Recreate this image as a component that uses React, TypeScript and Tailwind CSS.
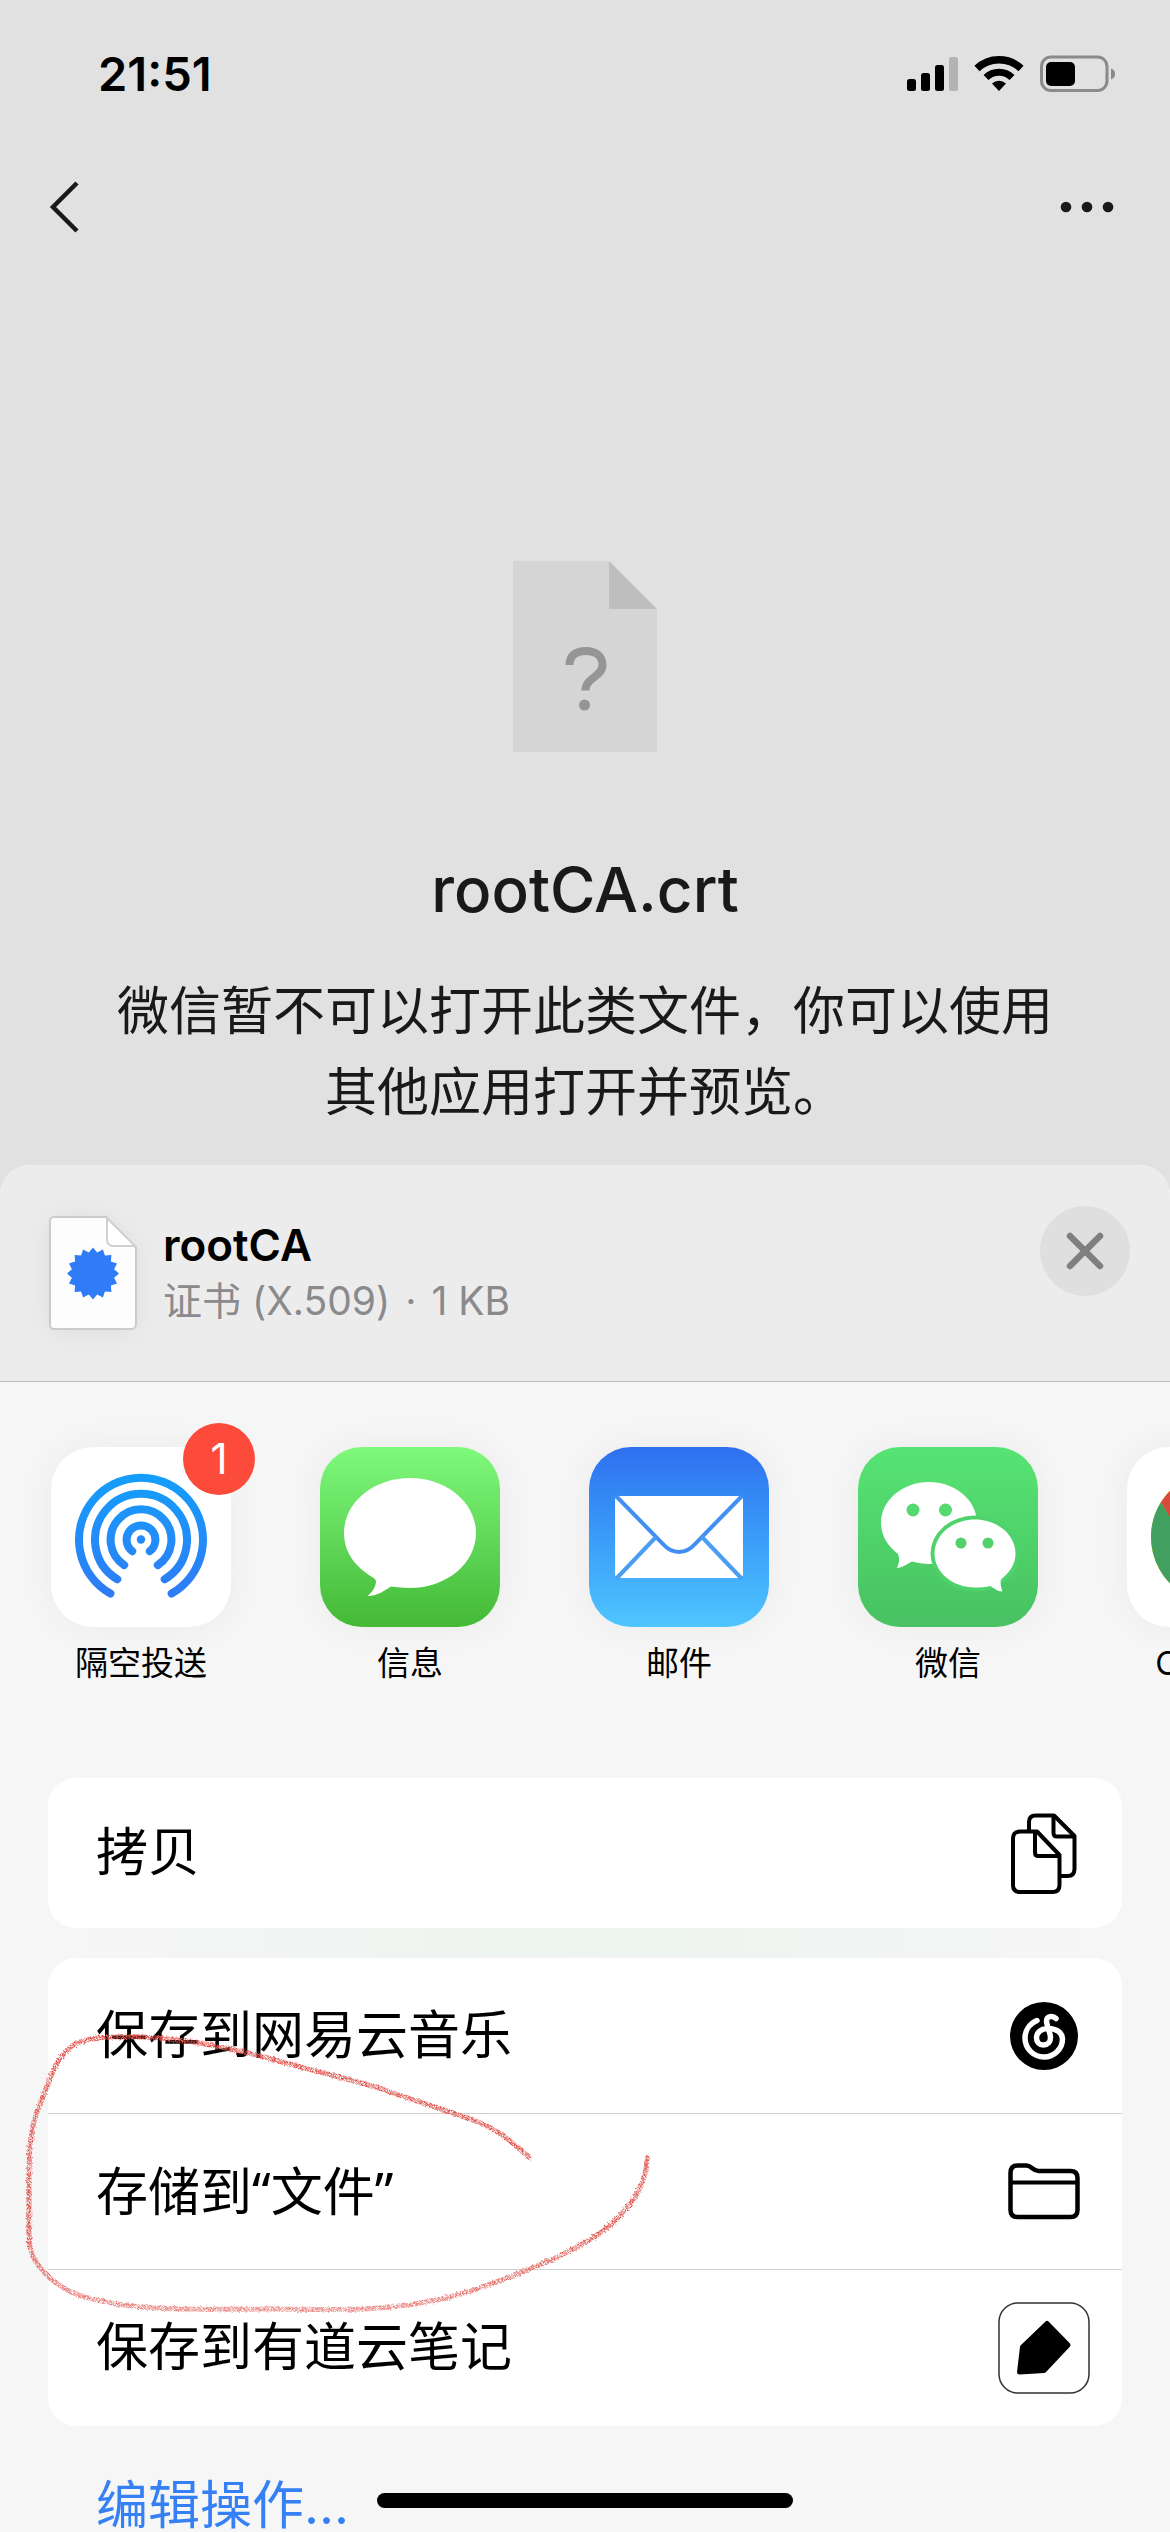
import React from "react";

const StatusIcons = () => (
  <svg className="h-[38px] w-[208px]" viewBox="0 0 208 38" fill="none" aria-hidden="true">
    <rect x="0" y="24" width="9" height="12" rx="2.5" fill="#000" />
    <rect x="14" y="18" width="9" height="18" rx="2.5" fill="#000" />
    <rect x="28" y="10" width="9" height="26" rx="2.5" fill="#000" />
    <rect x="42" y="2" width="9" height="34" rx="2.5" fill="#b3b3b3" />
    <path d="M70 13.5a32 32 0 0 1 44 0" stroke="#000" strokeWidth="7.5" />
    <path d="M79 22.5a18.500 18.500 0 0 1 26 0" stroke="#000" strokeWidth="7" />
    <path d="M92 36l-7-7.500a10 10 0 0 1 14 0z" fill="#000" />
    <rect x="134.500" y="2" width="65.500" height="33.500" rx="9.500" stroke="#8a8a8a" strokeWidth="3" />
    <rect x="139" y="7" width="29" height="24" rx="5" fill="#000" />
    <path d="M204 13.500c5.500 2 5.500 9 0 11z" fill="#8a8a8a" />
  </svg>
);

const FileUnknown = () => (
  <svg className="h-[192px] w-[144px]" viewBox="0 0 144 192" aria-hidden="true">
    <path d="M0 0h96l48 48v143H0z" fill="#d5d5d5" />
    <path d="M96 0l48 48H96z" fill="#bebebe" />
    <path d="M56.500 104c0-10 7-14 16.500-14s16.500 5 16.500 14c0 12-17 12.500-17 25.500" fill="none" stroke="#959595" strokeWidth="8" />
    <circle cx="71.500" cy="144" r="5.500" fill="#959595" />
  </svg>
);

const sealPoints = Array.from({ length: 32 }, (_, i) => {
  const r = i % 2 === 0 ? 26 : 21.5;
  const a = (i * Math.PI) / 16;
  return `${(44 + r * Math.sin(a)).toFixed(1)},${(57.5 - r * Math.cos(a)).toFixed(1)}`;
}).join(" ");

const CertificateIcon = () => (
  <svg className="h-[114px] w-[88px] shrink-0 drop-shadow-[0_2px_14px_rgba(0,0,0,0.06)]" viewBox="0 0 88 114" aria-hidden="true">
    <path d="M5 1h52l30 31v76a5 5 0 0 1-5 5H5a4 4 0 0 1-4-4V5a4 4 0 0 1 4-4z" fill="#fdfdfd" stroke="#cbcbcb" strokeWidth="2" />
    <path d="M58 2v22a6 6 0 0 0 6 6h22z" fill="#fff" stroke="#d0d0d0" strokeWidth="2" />
    <polygon points={sealPoints} fill="#2f7bf8" />
  </svg>
);

const AirDropIcon = () => (
  <svg className="h-full w-full" viewBox="0 0 180 180" aria-hidden="true">
    <defs>
      <linearGradient id="airdrop" gradientUnits="userSpaceOnUse" x1="0" y1="27" x2="0" y2="150">
        <stop offset="0" stopColor="#149ffb" />
        <stop offset="1" stopColor="#2f7bf5" />
      </linearGradient>
    </defs>
    <g fill="none" stroke="url(#airdrop)" strokeWidth="8" strokeLinecap="round">
      <path d="M59.400 146.600a62 62 0 1 1 61.200 0" />
      <path d="M66.300 132.200a46 46 0 1 1 47.400 0" />
      <path d="M73.200 118.100a30.400 30.400 0 1 1 33.600 0" />
      <path d="M81.200 104.200a14.400 14.400 0 1 1 17.600 0" />
    </g>
    <circle cx="90" cy="92.500" r="4.200" fill="#2489f8" />
  </svg>
);

const MessagesIcon = () => (
  <svg className="h-full w-full" viewBox="0 0 180 180" aria-hidden="true">
    <path d="M90 31c36.500 0 66 24.600 66 55s-29.500 55-66 55c-7 0-13-.8-19-1.500-5 3-13 9.500-23.500 9.500 5-4 8-9 8.500-14 0-2-1-3-3-4.500C35 120 24 105 24 86c0-30.400 29.500-55 66-55z" fill="#fff" />
  </svg>
);

const MailIcon = () => (
  <svg className="h-full w-full" viewBox="0 0 180 180" aria-hidden="true">
    <rect x="26" y="49" width="128" height="82" rx="4" fill="#fff" />
    <g fill="none" strokeWidth="4">
      <path d="M27 49l47 48c9 10.500 23 10.500 32 0l47-48" stroke="#418ff0" />
      <path d="M67 90l-40 42M113 90l40 42" stroke="#4a9df0" />
    </g>
  </svg>
);

const WeChatIcon = () => (
  <svg className="h-full w-full" viewBox="0 0 180 180" aria-hidden="true">
    <path d="M71 35c26.500 0 48 18.400 48 41s-21.500 41-48 41c-6 0-11-1-17-2.500-4 2-9 6-15 6.500 2-5 3-9 1-14-10-8-17-18-17-31 0-22.600 21.500-41 48-41z" fill="#fff" />
    <ellipse cx="117" cy="106.500" rx="44.500" ry="38" fill="#4fd26c" />
    <path d="M117 72.500c22.400 0 40.500 15.200 40.500 34 0 11-6 19-14.500 26-1 4 0 8 1.500 12-5 0-8-3-12-5.500-5 1-10 1.500-15.500 1.500-22.400 0-40.500-15.200-40.500-34s18.100-34 40.500-34z" fill="#fff" />
    <circle cx="55" cy="63" r="6.500" fill="#54da70" />
    <circle cx="87.500" cy="63" r="6.500" fill="#54da70" />
    <circle cx="103" cy="96" r="5.500" fill="#50d16c" />
    <circle cx="130" cy="96" r="5.500" fill="#50d16c" />
  </svg>
);

const ChromeIcon = () => (
  <svg className="h-full w-full" viewBox="0 0 180 180" aria-hidden="true">
    <circle cx="90" cy="90" r="66" fill="#fbc116" />
    <path d="M34 55a66 66 0 0 0 56 101l30-51-56-1z" fill="#419f5f" />
    <path d="M34 55a66 66 0 0 1 113 2H90L64 106z" fill="#d84a3b" />
    <circle cx="90" cy="90" r="30" fill="#fff" />
    <circle cx="90" cy="90" r="24" fill="#4285f4" />
  </svg>
);

const CopyIcon = () => (
  <svg className="h-[81px] w-[66px]" viewBox="0 0 66 81" fill="none" stroke="#000" strokeWidth="4" strokeLinejoin="round" aria-hidden="true">
    <path d="M18 18V9c0-4 2-6.500 6.500-6.500H43L63.500 23v33c0 4.500-2.500 7-7 7H49" />
    <path d="M42.500 3v17c0 2.500 1 3.500 3.500 3.500h17" />
    <path d="M9 18.500h17L48.500 42v30c0 4.500-2.500 7-7 7H9c-4.500 0-7-2.500-7-7V25.500c0-4.500 2.500-7 7-7z" />
    <path d="M24 19v20.500c0 2.500 1 3.500 3.500 3.500H48" />
  </svg>
);

const NetEaseIcon = () => (
  <svg className="size-[68px]" viewBox="0 0 68 68" aria-hidden="true">
    <circle cx="34" cy="34" r="34" fill="#000" />
    <path
      d="M27 18.500C19 22 15 29 15 36c0 11 9 19 19 19s18.500-8 18.500-18C52.500 31 47 26.500 38 26.500c-8 0-11.500 5-11.500 9.500 0 4 3 7 7 7s7-3 7-7.500c0-5-4-12-4-16.500 0-5 6-6 9.500-2.500"
      fill="none"
      stroke="#fff"
      strokeWidth="5.500"
      strokeLinecap="round"
    />
  </svg>
);

const FolderIcon = () => (
  <svg className="h-[57px] w-[72px]" viewBox="0 0 72 57" fill="none" stroke="#000" strokeWidth="4.500" strokeLinejoin="round" aria-hidden="true">
    <path d="M2.500 10c0-5 2.500-7.500 7-7.500h9c5 0 6 5.500 12 5.500h32c4.500 0 7 2.500 7 7v32c0 4.500-2.500 7-7 7h-53c-4.500 0-7-2.500-7-7z" />
    <path d="M3 19.500h66" strokeWidth="4" />
  </svg>
);

const YoudaoIcon = () => (
  <svg className="size-[92px]" viewBox="0 0 92 92" aria-hidden="true">
    <rect x="1" y="1" width="90" height="90" rx="19" fill="#fff" stroke="#333" strokeWidth="1.500" />
    <path d="M49 21.500L70 43 46 68.500 21.500 70 24.500 45z" fill="#000" stroke="#000" strokeWidth="5" strokeLinejoin="round" />
  </svg>
);

const CrayonLoop = () => (
  <svg className="pointer-events-none absolute -left-8 top-[66px] h-[300px] w-[650px]" viewBox="16 2024 650 300" fill="none" aria-hidden="true">
    <defs>
      <filter id="crayon" filterUnits="userSpaceOnUse" x="16" y="2024" width="650" height="300">
        <feTurbulence type="fractalNoise" baseFrequency="0.5" numOctaves="2" seed="4" result="noise" />
        <feColorMatrix in="noise" type="matrix" values="0 0 0 0 0  0 0 0 0 0  0 0 0 0 0  0 0 0 5 -1.9" result="grain" />
        <feComposite in="SourceGraphic" in2="grain" operator="in" result="grainy" />
        <feDisplacementMap in="grainy" in2="noise" scale="4" />
      </filter>
      <linearGradient id="crayonFade" gradientUnits="userSpaceOnUse" x1="0" y1="2060" x2="0" y2="2310">
        <stop offset="0" stopColor="#e0524c" />
        <stop offset="0.700" stopColor="#e0554f" />
        <stop offset="1" stopColor="#ea8580" />
      </linearGradient>
    </defs>
    <path
      d="M529 2157C515 2145 500 2130 473 2120C440 2108 412 2100 379 2088C348 2079 318 2072 286 2063C255 2054 225 2047 192 2042C160 2037 130 2035 98 2038C82 2040 74 2043 67 2050C56 2062 53 2070 49 2082C38 2108 33 2120 31 2137C28 2160 29 2175 29 2197C29 2215 28 2232 30 2247C33 2259 37 2265 45 2273C58 2287 72 2294 89 2298C110 2304 132 2307 156 2308C194 2310 230 2309 268 2309C306 2309 343 2311 379 2308C403 2306 424 2303 446 2298C474 2291 500 2281 527 2270C552 2260 574 2250 594 2237C608 2228 616 2221 625 2210C634 2200 639 2192 643 2180C646 2172 647 2166 647 2158"
      stroke="url(#crayonFade)"
      strokeWidth="5"
      strokeLinecap="round"
      filter="url(#crayon)"
    />
  </svg>
);

type ShareApp = { name: string; tile: string; icon: React.ReactNode; badge?: number };

const apps: ShareApp[] = [
  { name: "隔空投送", tile: "bg-white", icon: <AirDropIcon />, badge: 1 },
  { name: "信息", tile: "bg-linear-to-b from-[#7ff97c] to-[#43b935]", icon: <MessagesIcon /> },
  { name: "邮件", tile: "bg-linear-to-b from-[#306ff0] to-[#4fc6fe]", icon: <MailIcon /> },
  { name: "微信", tile: "bg-linear-to-b from-[#57e474] to-[#48c162]", icon: <WeChatIcon /> },
  { name: "Chrome", tile: "bg-white", icon: <ChromeIcon /> },
];

type Action = { id: string; label: React.ReactNode; icon: React.ReactNode };

const saveActions: Action[] = [
  { id: "netease", label: "保存到网易云音乐", icon: <NetEaseIcon /> },
  {
    id: "files",
    label: (
      <>
        存储到<span className="font-['Noto_Sans',sans-serif]">“</span>文件<span className="font-['Noto_Sans',sans-serif]">”</span>
      </>
    ),
    icon: <FolderIcon />,
  },
  { id: "youdao", label: "保存到有道云笔记", icon: <YoudaoIcon /> },
];

const ActionRow = ({ label, icon }: { label: React.ReactNode; icon: React.ReactNode }) => (
  <button type="button" className="flex h-full w-full items-center justify-between pl-12 pr-8 text-left text-[52px] leading-[52px] text-black">
    <span>{label}</span>
    <span className="flex w-[92px] shrink-0 items-center justify-center">{icon}</span>
  </button>
);

export default function App() {
  return (
    <div className="relative flex min-h-screen w-full flex-col overflow-hidden bg-[#e1e1e1] font-['Inter','Noto_Sans_CJK_SC',sans-serif]">
      <header>
        <div className="flex h-[148px] items-center justify-between pl-[98px] pr-[55px]">
          <time className="text-[47px] font-semibold leading-[56px] text-black">21:51</time>
          <StatusIcons />
        </div>
        <nav className="flex h-[118px] items-center justify-between px-12">
          <button type="button" aria-label="返回">
            <svg className="h-[54px] w-8" viewBox="0 0 32 54" fill="none" stroke="#191919" strokeWidth="4.500" aria-hidden="true">
              <path d="M29 3L5 27l24 24" />
            </svg>
          </button>
          <button type="button" aria-label="更多" className="pr-2">
            <svg className="h-3 w-[54px]" viewBox="0 0 54 12" fill="#191919" aria-hidden="true">
              <circle cx="6" cy="6" r="5.300" />
              <circle cx="27" cy="6" r="5.300" />
              <circle cx="48" cy="6" r="5.300" />
            </svg>
          </button>
        </nav>
      </header>

      <main className="flex h-[899px] flex-col items-center pt-[295px] text-[#191919]">
        <FileUnknown />
        <h1 className="mt-[97px] text-[62px] font-medium leading-[80px]">rootCA.crt</h1>
        <p className="mt-[41px] text-center text-[52px] leading-[81px]">
          微信暂不可以打开此类文件，你可以使用
          <br />
          其他应用打开并预览。
        </p>
      </main>

      <section className="flex flex-1 flex-col overflow-hidden rounded-t-[30px] bg-[#f6f6f6]">
        <div className="flex h-[217px] items-start border-b border-[#bcbcbc] bg-[#ececec] pl-[49px] pr-10">
          <div className="flex flex-1 items-center gap-[26px] pt-[51px]">
            <CertificateIcon />
            <div>
              <h2 className="text-[44px] font-semibold leading-[56px] text-black">rootCA</h2>
              <p className="text-[39px] leading-[56px] text-[#8a8a8c]">
                证书 (X.509)<span className="mx-1"> · </span>1 KB
              </p>
            </div>
          </div>
          <button type="button" aria-label="关闭" className="mt-[41px] flex size-[90px] items-center justify-center rounded-full bg-[#dfdfe0]">
            <svg className="size-10" viewBox="0 0 40 40" stroke="#7f7f7f" strokeWidth="6.500" strokeLinecap="round" aria-hidden="true">
              <path d="M5 5l30 30M35 5L5 35" />
            </svg>
          </button>
        </div>

        <ul className="flex h-[396px] gap-[89px] overflow-hidden pl-[51px] pt-[65px]">
          {apps.map((app) => (
            <li key={app.name} className="w-[180px] shrink-0">
              <button type="button" className="relative flex w-full flex-col items-center">
                <span className={`block size-[180px] overflow-hidden rounded-[42px] shadow-[0_0_36px_rgba(0,0,0,0.05)] ${app.tile}`}>{app.icon}</span>
                <span className="mt-3 whitespace-nowrap text-[33px] leading-[48px] text-black">{app.name}</span>
                {app.badge && (
                  <span className="absolute -right-6 -top-6 flex size-[72px] items-center justify-center rounded-full bg-[#fc4a3b] text-[42px] leading-none text-white">
                    {app.badge}
                  </span>
                )}
              </button>
            </li>
          ))}
        </ul>

        <div className="px-12">
          <div className="h-[150px] rounded-[28px] bg-white">
            <ActionRow label="拷贝" icon={<CopyIcon />} />
          </div>
          <div className="h-[30px] bg-linear-to-r from-[#f6f6f6] via-[#edf4ef] to-[#f6f6f6]" />
          <div className="relative">
            <ul className="divide-y divide-[#d0d0d0] rounded-[28px] bg-white">
              {saveActions.map((action) => (
                <li key={action.id} className="h-[156px]">
                  <ActionRow label={action.label} icon={action.icon} />
                </li>
              ))}
            </ul>
            <CrayonLoop />
          </div>
          <button type="button" className="ml-12 mt-[54px] block whitespace-nowrap text-[52px] leading-[52px] text-[#3580f5]">
            编辑操作...
          </button>
        </div>
      </section>

      <div className="absolute bottom-6 left-1/2 h-[15px] w-[416px] -translate-x-1/2 rounded-full bg-black" />
    </div>
  );
}
